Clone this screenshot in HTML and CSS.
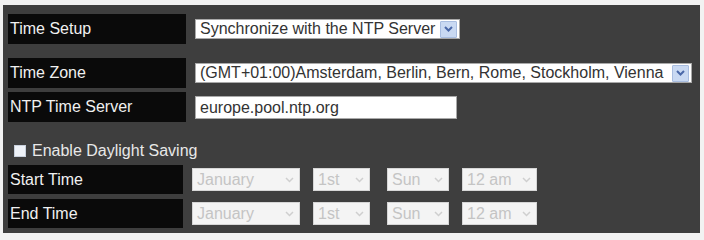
FILE: index.html
```html
<!DOCTYPE html>
<html lang="en">
<head>
    <meta charset="UTF-8">
    <title>Time Setup</title>
    <link rel="stylesheet" href="styles.css">
</head>
<body>
    <div class="panel">
        <div class="row">
            <div class="label">Time Setup</div>
            <div class="combo combo-setup">
                <span class="combo-text">Synchronize with the NTP Server</span>
                <span class="arrow"><svg width="9" height="6" viewBox="0 0 9 6"><path d="M1 1 L4.5 4.5 L8 1"/></svg></span>
            </div>
        </div>
        <div class="row row-zone">
            <div class="label">Time Zone</div>
            <div class="combo combo-zone">
                <span class="combo-text">(GMT+01:00)Amsterdam, Berlin, Bern, Rome, Stockholm, Vienna</span>
                <span class="arrow"><svg width="9" height="6" viewBox="0 0 9 6"><path d="M1 1 L4.5 4.5 L8 1"/></svg></span>
            </div>
        </div>
        <div class="row row-ntp">
            <div class="label">NTP Time Server</div>
            <div class="textbox">europe.pool.ntp.org</div>
        </div>
        <div class="check-row">
            <span class="checkbox"></span>
            <span>Enable Daylight Saving</span>
        </div>
        <div class="row row-dst">
            <div class="label">Start Time</div>
            <div class="combo off w-month"><span class="combo-text">January</span><span class="arrow"><svg width="9" height="6" viewBox="0 0 9 6"><path d="M1 1 L4.5 4.5 L8 1"/></svg></span></div>
            <div class="combo off w-week"><span class="combo-text">1st</span><span class="arrow"><svg width="9" height="6" viewBox="0 0 9 6"><path d="M1 1 L4.5 4.5 L8 1"/></svg></span></div>
            <div class="combo off w-day"><span class="combo-text">Sun</span><span class="arrow"><svg width="9" height="6" viewBox="0 0 9 6"><path d="M1 1 L4.5 4.5 L8 1"/></svg></span></div>
            <div class="combo off w-hour"><span class="combo-text">12 am</span><span class="arrow"><svg width="9" height="6" viewBox="0 0 9 6"><path d="M1 1 L4.5 4.5 L8 1"/></svg></span></div>
        </div>
        <div class="row row-dst row-end">
            <div class="label">End Time</div>
            <div class="combo off w-month"><span class="combo-text">January</span><span class="arrow"><svg width="9" height="6" viewBox="0 0 9 6"><path d="M1 1 L4.5 4.5 L8 1"/></svg></span></div>
            <div class="combo off w-week"><span class="combo-text">1st</span><span class="arrow"><svg width="9" height="6" viewBox="0 0 9 6"><path d="M1 1 L4.5 4.5 L8 1"/></svg></span></div>
            <div class="combo off w-day"><span class="combo-text">Sun</span><span class="arrow"><svg width="9" height="6" viewBox="0 0 9 6"><path d="M1 1 L4.5 4.5 L8 1"/></svg></span></div>
            <div class="combo off w-hour"><span class="combo-text">12 am</span><span class="arrow"><svg width="9" height="6" viewBox="0 0 9 6"><path d="M1 1 L4.5 4.5 L8 1"/></svg></span></div>
        </div>
    </div>
</body>
</html>
```

FILE: styles.css
```css
body{
    margin: 0;
    background-color: #f2f2f2;
    font-family: "Liberation Sans", Arial, sans-serif;
    font-size: 16px;
}
.panel{
    margin: 5px 4px 0 3px;
    height: 219px;
    padding: 9px 5px 0 5px;
    background-color: #3e3e3e;
    color: #ececec;
}
.row{
    display: flex;
    align-items: center;
    height: 30px;
}
.row-zone{
    margin-top: 14px;
}
.row-ntp{
    margin-top: 4px;
}
.label{
    align-self: stretch;
    display: flex;
    align-items: center;
    width: 176px;
    padding-left: 2px;
    margin-right: 9px;
    background-color: #0a0a0a;
    color: #f0f0f0;
}
.combo{
    display: flex;
    align-items: center;
    height: 18px;
    border: 1px solid #a9a9a9;
    background-color: #ffffff;
    color: #333333;
}
.combo-text{
    flex: 1;
    padding-left: 4px;
    white-space: nowrap;
    overflow: hidden;
}
.arrow{
    display: flex;
    align-items: center;
    justify-content: center;
    width: 15px;
    height: 15px;
    margin-right: 2px;
    border: 1px solid #a8bde0;
    background-color: #c9d9f2;
    border-radius: 1px;
}
.arrow path{
    fill: none;
    stroke: #4a68a8;
    stroke-width: 2;
}
.combo-setup{
    width: 263px;
}
.combo-zone{
    width: 495px;
}
.textbox{
    width: 256px;
    height: 21px;
    padding-left: 4px;
    line-height: 21px;
    border: 1px solid #a9a9a9;
    background-color: #ffffff;
    color: #333333;
}
.check-row{
    display: flex;
    align-items: center;
    height: 43px;
    padding-left: 6px;
    padding-top: 14px;
    box-sizing: border-box;
    color: #e8e8e8;
}
.checkbox{
    width: 10px;
    height: 10px;
    margin-right: 6px;
    border: 1px solid #c8d0dc;
    background-color: #eef2f8;
}
.row-dst{
    height: 29px;
}
.row-dst .label{
    width: 173px;
    margin-right: 9px;
}
.row-end{
    margin-top: 5px;
}
.combo.off{
    height: 21px;
    margin-right: 13px;
    border-color: #d6d6d6;
    background-color: #f4f4f4;
    color: #c4c4c4;
}
.combo.off .arrow{
    border: none;
    background-color: transparent;
}
.combo.off .arrow path{
    stroke: #cfcfcf;
    stroke-width: 1.5;
}
.w-month{
    width: 106px;
}
.w-week{
    width: 55px;
    margin-right: 17px !important;
}
.w-day{
    width: 60px;
}
.w-hour{
    width: 73px;
}
```
